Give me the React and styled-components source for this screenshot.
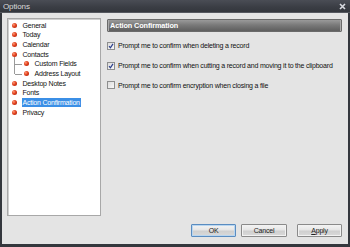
import React from "react";
import styled, { createGlobalStyle } from "styled-components";

const Global = createGlobalStyle`
  html, body { margin: 0; padding: 0; background: #e4e4e4; }
  body { font-family: "Liberation Sans", Arial, sans-serif; }
`;

const Window = styled.div`
  width: 350px;
  height: 247px;
  display: flex;
  flex-direction: column;
  background: #e4e4e4;
  overflow: hidden;
`;

const TitleBar = styled.div`
  height: 13px;
  display: flex;
  align-items: center;
  justify-content: space-between;
  padding: 0 4px 0 3px;
  background: linear-gradient(#4a4d55, #3a3d44 60%, #34373d);
  border-bottom: 1px solid #55585f;
  box-sizing: border-box;
`;

const Title = styled.span`
  color: #dcdcdc;
  font-size: 8px;
  letter-spacing: -0.1px;
`;

const Body = styled.div`
  flex: 1;
  display: flex;
  flex-direction: column;
  border-left: 2px solid #34373d;
  border-right: 2px solid #34373d;
  border-bottom: 3px solid #34373d;
  padding: 5px 6px 7px 5px;
  box-sizing: border-box;
  min-height: 0;
`;

const Main = styled.div`
  display: flex;
  gap: 6px;
  height: 198px;
`;

const Tree = styled.div`
  width: 94px;
  flex: none;
  background: #fff;
  border: 1px solid #a8a8a8;
  box-shadow: inset 1px 1px 0 #d0d0d0;
  box-sizing: border-box;
  padding-top: 1.5px;
`;

const Item = styled.div`
  position: relative;
  height: 9.65px;
  display: flex;
  align-items: center;
  padding-left: ${(p) => (p.$child ? 18 : 6)}px;
  font-size: 7px;
  letter-spacing: -0.2px;
  color: #111;
`;

const Bullet = styled.span`
  width: 5px;
  height: 5px;
  border-radius: 50%;
  flex: none;
  background: radial-gradient(circle at 35% 35%, #ff9a7a 0%, #e0401c 45%, #a11a08 100%);
  margin-left: -2.5px;
  margin-right: 5px;
`;

const Label = styled.span`
  padding: 0 1px;
  line-height: 9px;
  white-space: nowrap;
  ${(p) => p.$selected && `background: #3b8fe6; color: #fff;`}
`;

const VLine = styled.span`
  position: absolute;
  left: 6px;
  top: -2px;
  height: ${(p) => (p.$last ? "7px" : "10px")};
  border-left: 1px solid #9a9a9a;
`;

const HLine = styled.span`
  position: absolute;
  left: 7px;
  top: 4.8px;
  width: 7px;
  border-top: 1px solid #9a9a9a;
`;

const Right = styled.div`
  flex: 1;
  display: flex;
  flex-direction: column;
  padding-top: 1px;
`;

const Header = styled.div`
  height: 13px;
  display: flex;
  align-items: center;
  padding-left: 2px;
  color: #fff;
  font-weight: bold;
  font-size: 7.3px;
  letter-spacing: -0.1px;
  background: linear-gradient(#9a9a9a, #7a7a7a 45%, #5e5e5e);
  border: 1px solid #6a6a6a;
  border-radius: 1px;
  box-sizing: border-box;
  box-shadow: inset 1px 0 0 #aaa, inset -1px 0 0 #aaa;
  margin-bottom: 4px;
`;

const Row = styled.label`
  height: 19.7px;
  display: flex;
  align-items: center;
  gap: 3px;
  font-size: 7px;
  letter-spacing: -0.2px;
  color: #111;
  white-space: nowrap;
`;

const Box = styled.span`
  width: 8px;
  height: 8px;
  flex: none;
  box-sizing: border-box;
  border: 1px solid #8e8f8f;
  background: linear-gradient(135deg, #dcdcdc, #f8f8f8);
  display: flex;
  align-items: center;
  justify-content: center;
`;

const Footer = styled.div`
  margin-top: auto;
  display: flex;
  justify-content: flex-end;
  align-items: center;
  height: 13px;
`;

const Button = styled.button`
  width: ${(p) => p.$w}px;
  height: 13px;
  margin-left: ${(p) => p.$ml}px;
  padding: 0;
  font-family: "Liberation Sans", Arial, sans-serif;
  font-size: 7px;
  letter-spacing: -0.2px;
  color: #222;
  border: 1px solid ${(p) => (p.$default ? "#5a8cc0" : "#8a8a8a")};
  border-radius: 1px;
  background: linear-gradient(#f4f4f4, #e6e6e6 45%, #cfcfcf 55%, #dadada);
  box-shadow: inset 0 0 0 1px ${(p) => (p.$default ? "#b9d6f0" : "#f2f2f2")};
  display: flex;
  align-items: center;
  justify-content: center;
`;

const Check = () => (
  <svg width="6" height="6" viewBox="0 0 6 6">
    <path d="M1 3.2 L2.4 4.8 L5 0.8" fill="none" stroke="#2a3e8c" strokeWidth="1.2" />
  </svg>
);

const Close = () => (
  <svg width="7" height="7" viewBox="0 0 7 7">
    <path d="M1 1 L6 6 M6 1 L1 6" stroke="#d8dae0" strokeWidth="1.6" />
  </svg>
);

const items = [
  { t: "General" },
  { t: "Today" },
  { t: "Calendar" },
  { t: "Contacts" },
  { t: "Custom Fields", child: true },
  { t: "Address Layout", child: true, last: true },
  { t: "Desktop Notes" },
  { t: "Fonts" },
  { t: "Action Confirmation", selected: true },
  { t: "Privacy" },
];

const rows = [
  { t: "Prompt me to confirm when deleting a record", c: true },
  { t: "Prompt me to confirm when cutting a record and moving it to the clipboard", c: true },
  { t: "Prompt me to confirm encryption when closing a file", c: false },
];

export default function App() {
  return (
    <Window>
      <Global />
      <TitleBar>
        <Title>Options</Title>
        <Close />
      </TitleBar>
      <Body>
        <Main>
          <Tree>
            {items.map((it) => (
              <Item key={it.t} $child={it.child}>
                {it.child && (
                  <>
                    <VLine $last={it.last} />
                    <HLine />
                  </>
                )}
                <Bullet />
                <Label $selected={it.selected}>{it.t}</Label>
              </Item>
            ))}
          </Tree>
          <Right>
            <Header>Action Confirmation</Header>
            {rows.map((r) => (
              <Row key={r.t}>
                <Box>{r.c && <Check />}</Box>
                {r.t}
              </Row>
            ))}
          </Right>
        </Main>
        <Footer>
          <Button $w={45} $ml={0} $default>OK</Button>
          <Button $w={46} $ml={5}>Cancel</Button>
          <Button $w={45} $ml={10}>
            <span><u>A</u>pply</span>
          </Button>
        </Footer>
      </Body>
    </Window>
  );
}
